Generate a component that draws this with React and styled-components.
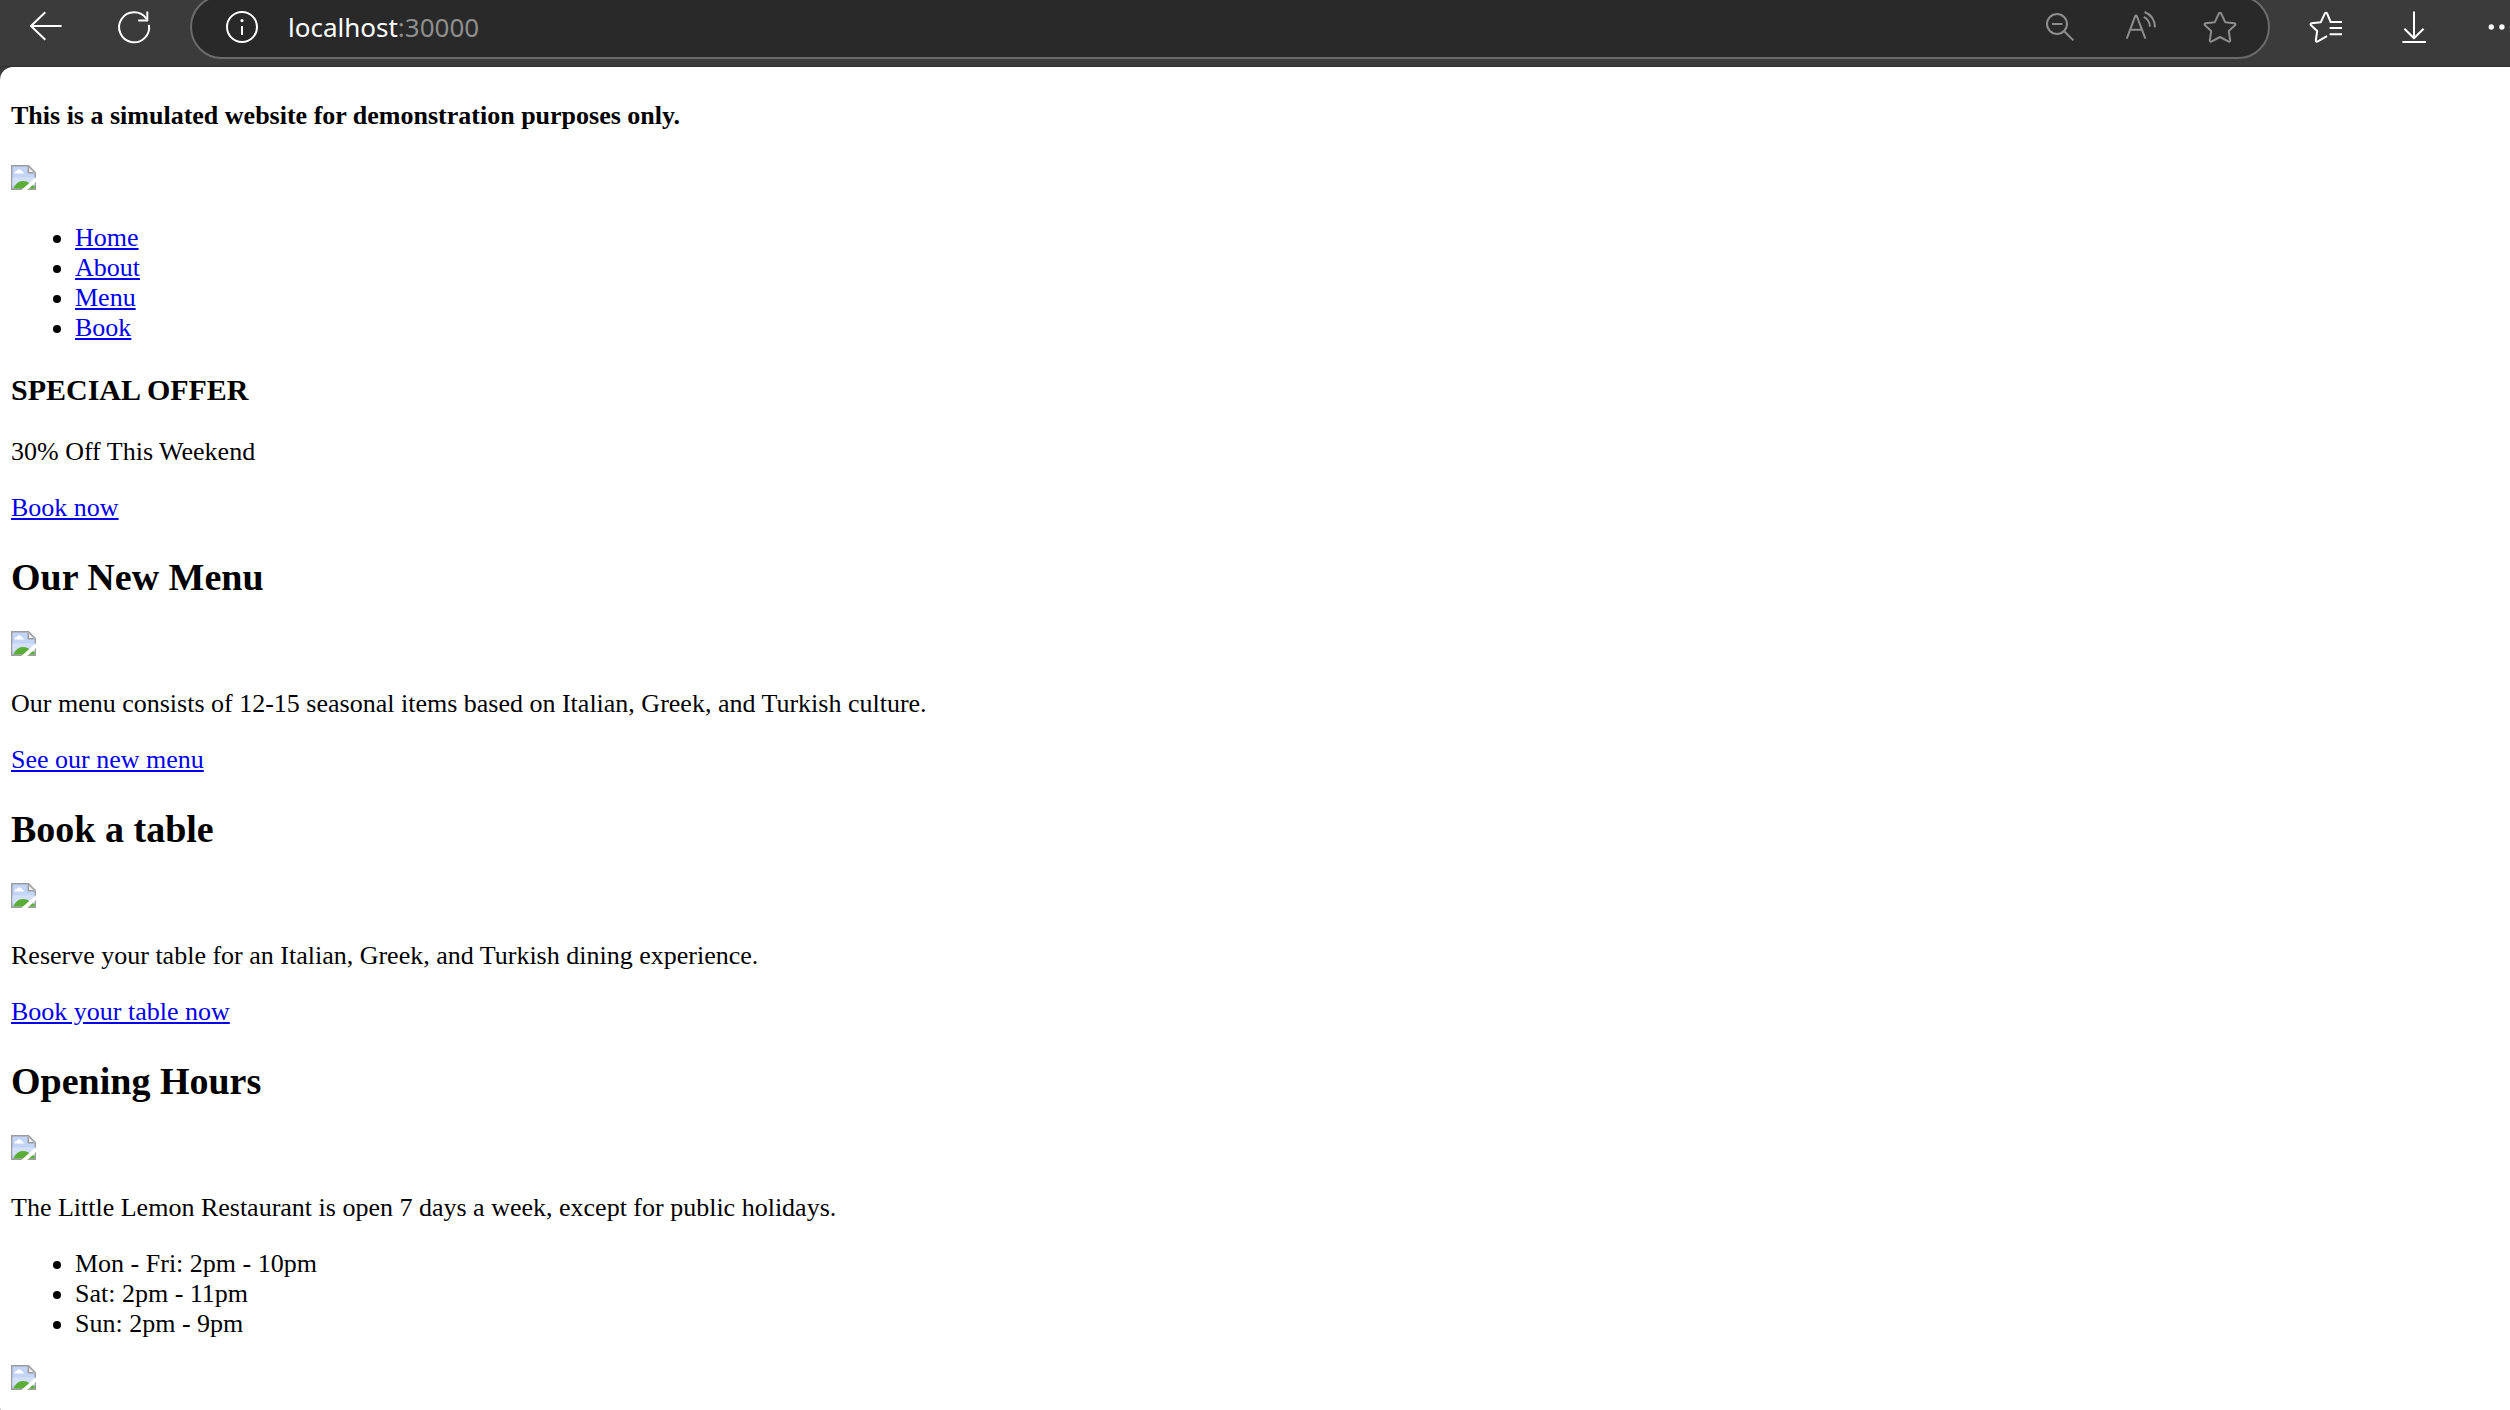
import styled, { createGlobalStyle } from 'styled-components';

const navLinks = ['Home', 'About', 'Menu', 'Book'];

const openingHours = ['Mon - Fri: 2pm - 10pm', 'Sat: 2pm - 11pm', 'Sun: 2pm - 9pm'];

const BackIcon = () => (
  <Icon viewBox='0 0 32 32'>
    <path d='M15.3 1.3L1 15l14.3 13.7M1 15h30.6' />
  </Icon>
);

const RefreshIcon = () => (
  <Icon viewBox='0 0 32 32'>
    <path d='M30.9 13.8A15 15 0 1 1 28.4 7.7' />
    <path d='M29.3 .4v9H20.2' />
  </Icon>
);

const InfoIcon = () => (
  <Icon viewBox='0 0 32 32'>
    <circle cx='16' cy='16' r='15' />
    <path d='M16 15v9' />
    <circle className='fill' cx='16' cy='9.6' r='1.6' />
  </Icon>
);

const ZoomOutIcon = () => (
  <Icon viewBox='0 0 32 32'>
    <circle cx='13' cy='13' r='10' />
    <path d='M8 13h10.4M20.2 20.2l9.2 9.2' />
  </Icon>
);

const ReadAloudIcon = () => (
  <Icon viewBox='0 0 32 32'>
    <path d='M2.8 27.6L11.2 5.2q.8-1.6 1.6 0l8.6 22.4M6.2 18.8h11.8' />
    <path d='M19.7 5.9Q25.4 8.6 26 15.6' />
    <path d='M20.6 1Q30.6 5 31 16.4' />
  </Icon>
);

const StarIcon = () => (
  <Icon viewBox='0 0 32 32'>
    <path d='M14.8 2.6Q16 .9 17.2 2.6L21.2 11.2 30.4 12.3Q32.2 12.9 31 14.3L24.8 20 26.2 29.4Q26 31.2 24.2 30.4L16 26 7.8 30.4Q6 31.2 5.8 29.4L7.2 20 1 14.3Q-.2 12.9 1.6 12.3L10.8 11.2Z' />
  </Icon>
);

const FavoritesIcon = () => (
  <Icon viewBox='0 0 32 32'>
    <path d='M32 11H20.6L17.2 2.6Q16 .9 14.8 2.6L10.8 11.2 1.6 12.3Q-.2 12.9 1 14.3L7.2 20 5.8 29.4Q6 31.2 7.8 30.4L17 25.2' />
    <path d='M19.6 17H32M19.6 23.2H32' />
  </Icon>
);

const DownloadIcon = () => (
  <Icon viewBox='0 0 32 32'>
    <path d='M16 .4v26.6M6.4 17.8L16 27.2l9.6-9.4M4.4 31h23.6' />
  </Icon>
);

const MoreIcon = () => (
  <Icon viewBox='0 0 32 32'>
    <circle className='fill' cx='5.3' cy='16' r='2.7' />
    <circle className='fill' cx='15.9' cy='16' r='2.7' />
    <circle className='fill' cx='26.5' cy='16' r='2.7' />
  </Icon>
);

const MissingImage = () => (
  <ImageLine>
    <Thumb viewBox='0 0 16 16' role='img' aria-label='Missing image'>
      <path d='M0 0h11.4L16 4.6V16H0z' fill='#9c9c9c' />
      <path d='M.9.9h10L15.1 5v10.1H.9z' fill='#c3d5f6' />
      <path d='M.9 8h14.2v5H.9z' fill='#d3e0fa' />
      <path d='M2.2 5.4q0-1.5 1.5-1.5Q4.2 2.6 5.5 2.8q1.3.1 1.5 1.3 1.2.1 1.2 1.3z' fill='#fff' />
      <path d='M1.4 15.1Q3.6 10.4 7.4 10.3q3.6 0 5 2.2l2.7 1v1.6z' fill='#5aad35' />
      <path d='M10.6.9v4.6h4.5z' fill='#9c9c9c' />
      <path d='M11.6 1.8v2.7h2.6z' fill='#f4f4f4' />
      <path d='M16 7.8v3.1L10.4 16H6.6z' fill='#fff' />
    </Thumb>
  </ImageLine>
);

const Toolbar = () => (
  <StyledToolbar>
    <IconButton aria-label='Back'>
      <BackIcon />
    </IconButton>
    <IconButton aria-label='Refresh'>
      <RefreshIcon />
    </IconButton>

    <AddressBar>
      <IconButton aria-label='View site information'>
        <InfoIcon />
      </IconButton>
      <Address>
        localhost<span>:30000</span>
      </Address>
      <AddressActions>
        <IconButton $muted aria-label='Zoom out'>
          <ZoomOutIcon />
        </IconButton>
        <IconButton $muted aria-label='Read aloud'>
          <ReadAloudIcon />
        </IconButton>
        <IconButton $muted aria-label='Add to favorites'>
          <StarIcon />
        </IconButton>
      </AddressActions>
    </AddressBar>

    <IconButton aria-label='Favorites'>
      <FavoritesIcon />
    </IconButton>
    <IconButton aria-label='Downloads'>
      <DownloadIcon />
    </IconButton>
    <IconButton $clipped aria-label='Settings and more'>
      <MoreIcon />
    </IconButton>
  </StyledToolbar>
);

const Feature = ({ title, text, children }) => (
  <section>
    <Heading>{title}</Heading>
    <MissingImage />
    <Text>{text}</Text>
    {children}
  </section>
);

const App = () => {
  return (
    <Window>
      <GlobalStyle />
      <Toolbar />

      <Page>
        <Notice>This is a simulated website for demonstration purposes only.</Notice>

        <header>
          <MissingImage />
          <nav>
            <List>
              {navLinks.map((link) => (
                <li key={link}>
                  <Link href='#'>{link}</Link>
                </li>
              ))}
            </List>
          </nav>
        </header>

        <main>
          <section>
            <Offer>SPECIAL OFFER</Offer>
            <Text>30% Off This Weekend</Text>
            <Link href='#'>Book now</Link>
          </section>

          <Feature
            title='Our New Menu'
            text='Our menu consists of 12-15 seasonal items based on Italian, Greek, and Turkish culture.'
          >
            <Link href='#'>See our new menu</Link>
          </Feature>

          <Feature
            title='Book a table'
            text='Reserve your table for an Italian, Greek, and Turkish dining experience.'
          >
            <Link href='#'>Book your table now</Link>
          </Feature>

          <Feature
            title='Opening Hours'
            text='The Little Lemon Restaurant is open 7 days a week, except for public holidays.'
          >
            <List>
              {openingHours.map((hours) => (
                <li key={hours}>{hours}</li>
              ))}
            </List>
          </Feature>
        </main>

        <footer>
          <MissingImage />
        </footer>
      </Page>
    </Window>
  );
};

const GlobalStyle = createGlobalStyle`
  body {
    margin: 0;
    background: #3b3b3b;
  }
`;

const Window = styled.div`
  display: flex;
  flex-direction: column;
  min-height: 100vh;
`;

/* browser toolbar */

const StyledToolbar = styled.div`
  display: flex;
  align-items: center;
  gap: 56px;
  box-sizing: border-box;
  height: 67px;
  padding: 0 0 13px 30px;
  overflow: hidden;
  background: #3b3b3b;
  border-bottom: 1px solid #312e2e;
`;

const IconButton = styled.button`
  display: flex;
  flex: none;
  width: ${({ $clipped }) => ($clipped ? '24px' : '32px')};
  height: 32px;
  padding: 0;
  border: 0;
  background: none;
  color: ${({ $muted }) => ($muted ? '#8e8e8e' : '#fff')};
  cursor: pointer;
`;

const Icon = styled.svg`
  flex: none;
  width: 32px;
  height: 32px;
  overflow: visible;
  fill: none;
  stroke: currentColor;
  stroke-width: 2;
  stroke-linejoin: round;

  .fill {
    fill: currentColor;
    stroke: none;
  }
`;

const AddressBar = styled.div`
  display: flex;
  flex: 1;
  align-items: center;
  gap: 30px;
  box-sizing: border-box;
  height: 64px;
  margin: 0 -16px;
  padding: 0 32px 0 34px;
  border: 2px solid #6b6b6b;
  border-radius: 32px;
  background: #292929;
`;

const Address = styled.div`
  flex: 1;
  color: #fff;
  font-family: 'Noto Sans', 'Open Sans', sans-serif;
  font-size: 26px;
  line-height: 36px;

  span {
    color: #8e8e8e;
  }
`;

const AddressActions = styled.div`
  display: flex;
  gap: 48px;
`;

/* page */

const Page = styled.div`
  flex: 1;
  padding: 0 11px 14px;
  border-radius: 13px 0 0 3px;
  background: #fff;
  color: #000;
  font-family: 'Liberation Serif', 'Times New Roman', serif;
  font-size: 26px;
  line-height: 30px;
`;

const Notice = styled.h4`
  margin: 0;
  padding: 34px 0;
  font-size: 26px;
`;

const Offer = styled.h3`
  margin: 30px 0;
  font-size: 30px;
  line-height: 34px;
`;

const Heading = styled.h2`
  margin: 32px 0;
  font-size: 38px;
  line-height: 44px;
`;

const Text = styled.p`
  margin: 26px 0;
`;

const List = styled.ul`
  margin: 26px 0;
  padding-left: 64px;
`;

const Link = styled.a`
  color: #0000ee;
  text-decoration: underline;
`;

const ImageLine = styled.div`
  height: 32px;
`;

const Thumb = styled.svg`
  display: block;
  width: 25px;
  height: 25px;
`;

export default App;
